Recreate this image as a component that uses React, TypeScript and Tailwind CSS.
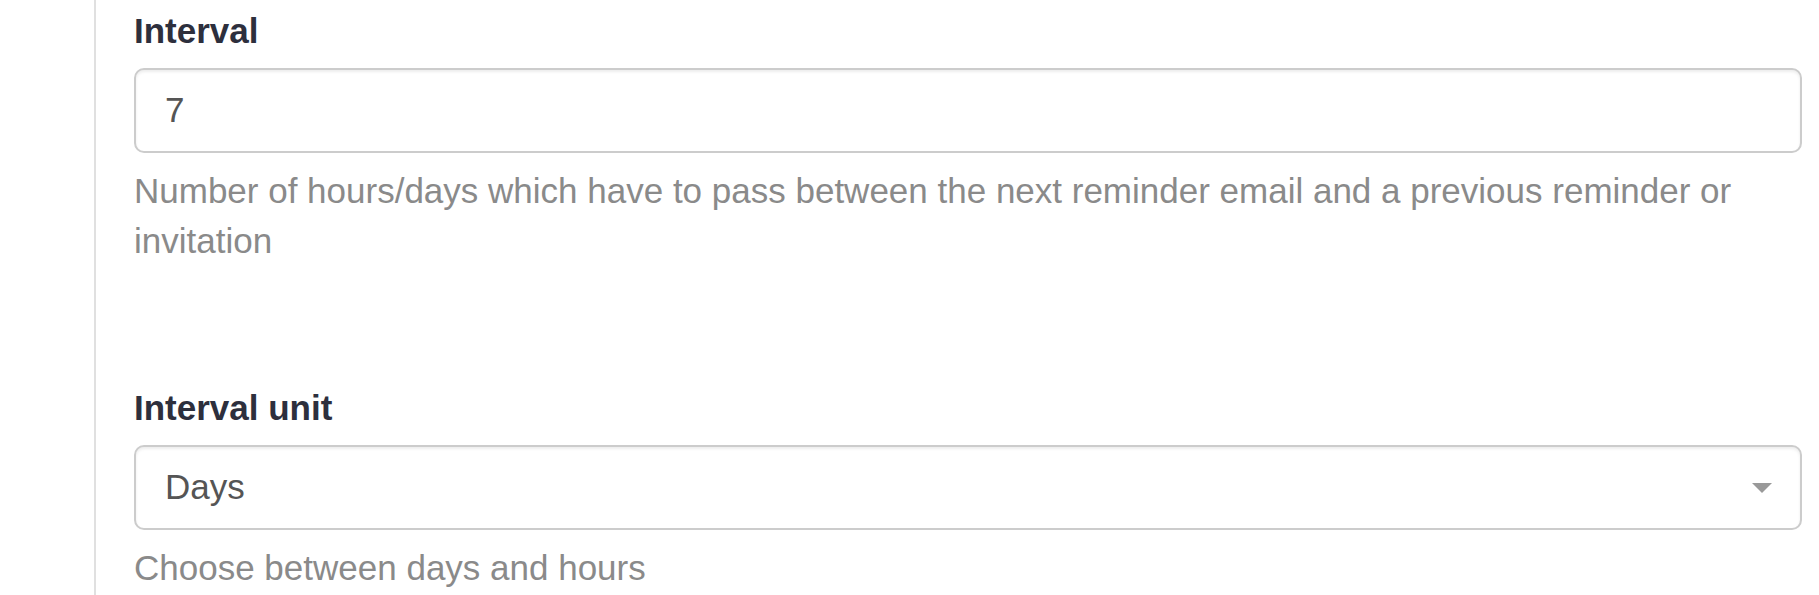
import React from 'react';

const font = { fontFamily: '"Liberation Sans", Arial, Helvetica, sans-serif' };

function Field({ label, help, children }: { label: string; help: string; children: React.ReactNode }) {
    return (
        <div>
            <label className="block text-[35px] leading-[50px] font-bold text-[#2d2f3d] mb-[12px]">{label}</label>
            {children}
            <p className="mt-[13px] text-[35px] leading-[50px] text-[#8a8a8a]">{help}</p>
        </div>
    );
}

export default function App() {
    return (
        <div className="flex w-[1819px] h-[595px] overflow-hidden bg-white" style={font}>
            <div className="w-[94px] shrink-0" />
            <div className="w-[2px] shrink-0 bg-[#e0e0e0]" />
            <div className="flex-1 pl-[38px] pr-[17px] pt-[6px]">
                {/* Interval */}
                <Field
                    label="Interval"
                    help="Number of hours/days which have to pass between the next reminder email and a previous reminder or invitation"
                >
                    <div className="h-[85px] flex items-center px-[29px] border-2 border-[#cccccc] rounded-[10px] shadow-[inset_0_2px_3px_rgba(0,0,0,0.075)] text-[35px] text-[#555555]">
                        7
                    </div>
                </Field>

                <div className="h-[117px]" />

                {/* Interval unit */}
                <Field label="Interval unit" help="Choose between days and hours">
                    <div className="h-[85px] flex items-center justify-between pl-[29px] pr-[28px] border-2 border-[#cccccc] rounded-[10px] shadow-[inset_0_2px_3px_rgba(0,0,0,0.075)] text-[35px] text-[#555555]">
                        <span>Days</span>
                        <span className="w-0 h-0 border-x-[10px] border-x-transparent border-t-[10px] border-t-[#999999]" />
                    </div>
                </Field>
            </div>
        </div>
    );
}
